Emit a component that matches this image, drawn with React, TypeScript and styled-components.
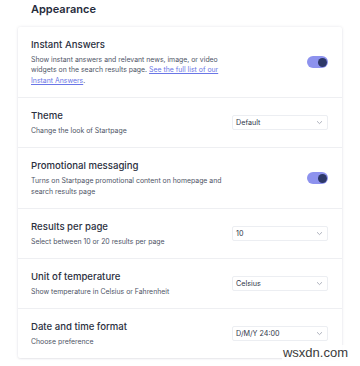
import React from 'react';
import styled, { createGlobalStyle } from 'styled-components';

const GlobalStyle = createGlobalStyle`
  html, body {
    margin: 0;
    padding: 0;
    background: #ffffff;
    font-family: Inter, "Noto Sans", sans-serif;
    -webkit-font-smoothing: antialiased;
  }
`;

const Page = styled.div`
  width: 360px;
  height: 366px;
  padding: 0 18px;
  box-sizing: border-box;
  position: relative;
  overflow: hidden;
`;

const Heading = styled.h2`
  margin: 0;
  padding: 2px 0 0 13px;
  height: 27px;
  box-sizing: border-box;
  font-size: 11px;
  font-weight: 600;
  color: #262c3c;
`;

const Card = styled.div`
  background: #fff;
  border-radius: 2px;
  box-shadow: 0 0 3px rgba(30, 40, 70, 0.12), 0 1px 2px rgba(30, 40, 70, 0.06);
`;

const Row = styled.div<{ $h: number }>`
  height: ${({ $h }) => $h}px;
  box-sizing: border-box;
  display: flex;
  align-items: center;
  justify-content: space-between;
  padding: 0 14px 0 13px;
  border-bottom: 1px solid #eeeff2;
  &:last-child {
    border-bottom: none;
  }
`;

const TextCol = styled.div`
  display: flex;
  flex-direction: column;
  gap: 3px;
  max-width: 200px;
`;

const Title = styled.div`
  font-size: 9.6px;
  font-weight: 500;
  color: #2b3040;
  line-height: 14px;
`;

const Desc = styled.div`
  font-size: 6.9px;
  line-height: 10.5px;
  color: #4e5466;
`;

const DocLink = styled.a`
  color: #6a76e6;
  text-decoration: underline;
`;

const Track = styled.div`
  width: 21px;
  height: 12px;
  border-radius: 6px;
  background: #8d92ee;
  display: flex;
  align-items: center;
  justify-content: flex-end;
  padding: 0 1.5px;
  box-sizing: border-box;
`;

const Knob = styled.div`
  width: 9px;
  height: 9px;
  border-radius: 50%;
  background: #2d3868;
`;

const Select = styled.div`
  width: 96px;
  height: 15px;
  box-sizing: border-box;
  border: 1px solid #eceef2;
  border-radius: 2px;
  display: flex;
  align-items: center;
  justify-content: space-between;
  padding: 0 4px 0 3px;
  font-size: 7.2px;
  color: #30364a;
`;

const Watermark = styled.div`
  position: absolute;
  right: 11px;
  bottom: 6px;
  font-family: "Liberation Sans", Arial, sans-serif;
  font-size: 13px;
  color: #3a3a3a;
  background: rgba(255, 255, 255, 0.85);
  padding: 0 1px;
`;

const Toggle = () => (
  <Track>
    <Knob />
  </Track>
);

const Dropdown = ({ value }: { value: string }) => (
  <Select>
    <span>{value}</span>
    <svg width="7" height="5" viewBox="0 0 7 5">
      <path d="M1 1.2 L3.5 3.6 L6 1.2" fill="none" stroke="#9a9fad" strokeWidth="0.8" />
    </svg>
  </Select>
);

export default function App() {
  return (
    <Page>
      <GlobalStyle />
      <Heading>Appearance</Heading>
      <Card>
        <Row $h={71}>
          <TextCol>
            <Title>Instant Answers</Title>
            <Desc>
              Show instant answers and relevant news, image, or video widgets on the search results
              page. <DocLink>See the full list of our Instant Answers</DocLink>.
            </Desc>
          </TextCol>
          <Toggle />
        </Row>
        <Row $h={50}>
          <TextCol>
            <Title>Theme</Title>
            <Desc>Change the look of Startpage</Desc>
          </TextCol>
          <Dropdown value="Default" />
        </Row>
        <Row $h={61}>
          <TextCol>
            <Title>Promotional messaging</Title>
            <Desc>Turns on Startpage promotional content on homepage and search results page</Desc>
          </TextCol>
          <Toggle />
        </Row>
        <Row $h={50}>
          <TextCol>
            <Title>Results per page</Title>
            <Desc>Select between 10 or 20 results per page</Desc>
          </TextCol>
          <Dropdown value="10" />
        </Row>
        <Row $h={50}>
          <TextCol>
            <Title>Unit of temperature</Title>
            <Desc>Show temperature in Celsius or Fahrenheit</Desc>
          </TextCol>
          <Dropdown value="Celsius" />
        </Row>
        <Row $h={49}>
          <TextCol>
            <Title>Date and time format</Title>
            <Desc>Choose preference</Desc>
          </TextCol>
          <Dropdown value="D/M/Y 24:00" />
        </Row>
      </Card>
      <Watermark>wsxdn.com</Watermark>
    </Page>
  );
}
